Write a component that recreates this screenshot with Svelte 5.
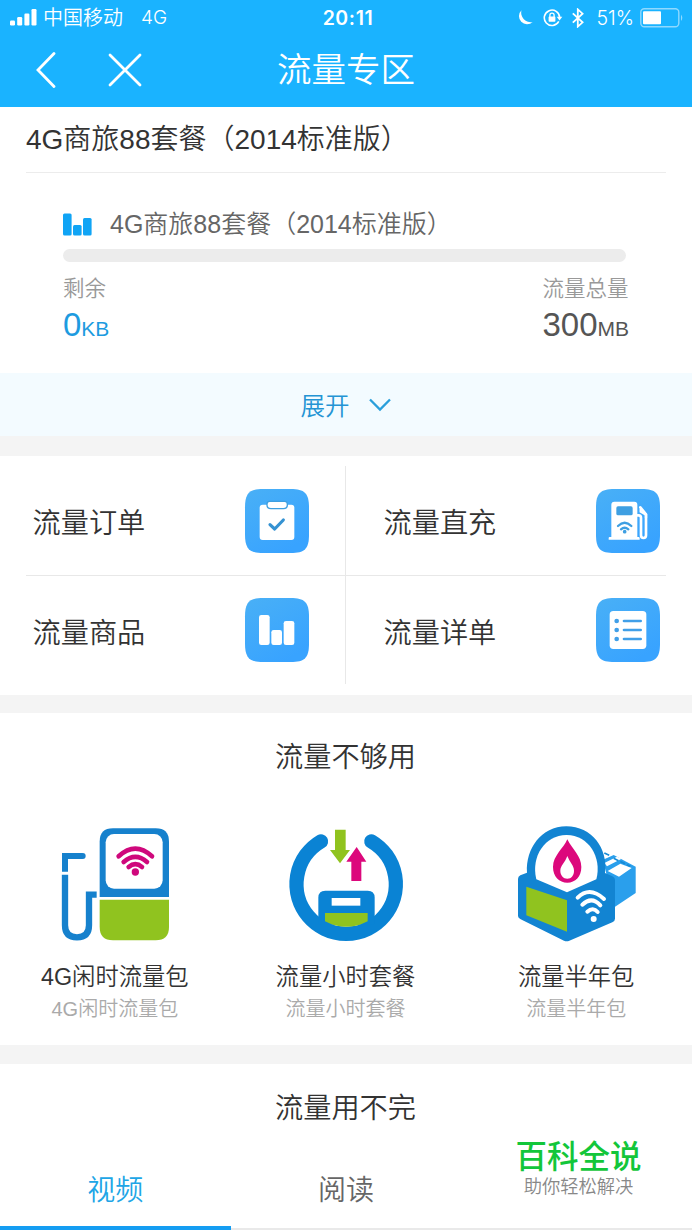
<script>
  let carrier = '中国移动'
  let plan = { name: '4G商旅88套餐', version: '2014标准版' }

  const entries = [
    { icon: 'order', label: '流量订单' },
    { icon: 'charge', label: '流量直充' },
    { icon: 'goods', label: '流量商品' },
    { icon: 'detail', label: '流量详单' }
  ]

  const products = [
    { icon: 'idle', name: '4G闲时流量包' },
    { icon: 'hour', name: '流量小时套餐' },
    { icon: 'half', name: '流量半年包' }
  ]

  const tabs = ['视频', '阅读', '']
  let active = 0
</script>

<div class="page">
  <header>
    <div class="status">
      <div class="left">
        <svg width="27" height="17" viewBox="0 0 27 17" fill="#fff">
          <rect x="0" y="11.5" width="5" height="5" rx="1.2" />
          <rect x="7.2" y="8" width="5" height="8.5" rx="1.2" />
          <rect x="14.4" y="4.5" width="5" height="12" rx="1.2" />
          <rect x="21.5" y="0" width="5" height="16.5" rx="1.2" />
        </svg>
        <span class="carrier">{carrier}</span>
        <span class="net">4G</span>
      </div>
      <b class="time">20:11</b>
      <div class="right">
        <svg width="16" height="16" viewBox="0 0 16 16">
          <path d="M4.5 0.3A8 8 0 1 0 15.7 12A9.5 9.5 0 0 1 4.5 0.3z" fill="#fff" />
        </svg>
        <svg class="lock" width="20" height="18" viewBox="0 0 20 18" fill="none" stroke="#fff">
          <path d="M15.8 12.4A7.7 7.7 0 1 1 16.7 8.5" stroke-width="1.6" />
          <path d="M13.7 7.8h5.6l-2.8 3.6z" fill="#fff" stroke="none" />
          <path d="M6.9 8V6.2a2.1 2.1 0 0 1 4.2 0V8" stroke-width="1.3" />
          <rect x="5.6" y="7.6" width="6.8" height="5.2" rx="0.8" fill="#fff" stroke="none" />
        </svg>
        <svg class="bt" width="12" height="20" viewBox="0 0 12 20" fill="none" stroke="#fff" stroke-width="1.8">
          <path d="M0.8 5.3l9.8 9-4.8 4.3V1.4l4.8 4.3-9.8 9" />
        </svg>
        <span class="percent">51%</span>
        <svg class="battery" width="44" height="20" viewBox="0 0 44 20">
          <rect x="0.8" y="0.8" width="38" height="18" rx="3.5" fill="none" stroke="#8fd9ff" stroke-width="1.4" />
          <rect x="3" y="3.2" width="18" height="13" rx="1" fill="#fff" />
          <path d="M41 6.5q2.6 3.3 0 6.6z" fill="#8fd9ff" />
        </svg>
      </div>
    </div>
    <nav>
      <div class="actions">
        <svg width="20" height="36" viewBox="0 0 20 36" fill="none" stroke="#fff" stroke-width="2.8" stroke-linecap="round">
          <path d="M18 1.5L2 18l16 16.5" />
        </svg>
        <svg width="34" height="34" viewBox="0 0 34 34" fill="none" stroke="#fff" stroke-width="2.8" stroke-linecap="round">
          <path d="M2 2l30 30M32 2L2 32" />
        </svg>
      </div>
      <h1>流量专区</h1>
    </nav>
  </header>

  <section class="plan">
    <h2>{plan.name}（{plan.version}）</h2>
    <div class="usage">
      <div class="name">
        <svg width="29" height="23" viewBox="0 0 29 23" fill="#10a4f5">
          <rect x="0" y="0.5" width="8.6" height="22" rx="1.5" />
          <rect x="10" y="12" width="8.6" height="10.5" rx="1.5" />
          <rect x="20" y="5" width="8.6" height="17.5" rx="1.5" />
        </svg>
        <span>{plan.name}（{plan.version}）</span>
      </div>
      <div class="track"></div>
      <div class="amounts">
        <div>
          <p>剩余</p>
          <div class="num blue">0<small>KB</small></div>
        </div>
        <div>
          <p>流量总量</p>
          <div class="num">300<small>MB</small></div>
        </div>
      </div>
    </div>
    <div class="expand">
      <span>展开</span>
      <svg width="24" height="14" viewBox="0 0 24 14" fill="none" stroke="#2a9fdb" stroke-width="2.3">
        <path d="M2 1.5l10 10 10-10" />
      </svg>
    </div>
  </section>

  <section class="entries">
    {#each entries as e}
      <div class="entry">
        <span>{e.label}</span>
        <svg width="66" height="66" viewBox="0 0 198 198">
          <defs>
            <linearGradient id="bg-{e.icon}" x1="0" y1="0" x2="0.6" y2="1">
              <stop offset="0" stop-color="#49b0f6" />
              <stop offset="1" stop-color="#38a3ff" />
            </linearGradient>
          </defs>
          <path d="M3 58C3 16 16 3 58 3H140C182 3 195 16 195 58V140C195 182 182 195 140 195H58C16 195 3 182 3 140z" fill="url(#bg-{e.icon})" />
          {#if e.icon === 'order'}
            <rect x="47" y="50" width="104" height="106" rx="9" fill="#fff" />
            <path d="M69 48q0-8 8-8h45q8 0 8 8v3q0 11-12 11H81q-12 0-12-11z" fill="#fff" stroke="#3e9fe0" stroke-width="4" />
            <path d="M78 110l14 13 26-27" fill="none" stroke="#3592d2" stroke-width="9.5" stroke-linecap="round" stroke-linejoin="round" />
          {:else if e.icon === 'charge'}
            <path d="M49 50q0-9 9-9h60q9 0 9 9v97h4q3 0 3 3v5H41v-5q0-3 3-3h5z" fill="#fff" />
            <rect x="64" y="55" width="49" height="27" rx="5" fill="#3e9fe2" />
            <g fill="none" stroke="#3e9fe2" stroke-width="7" stroke-linecap="round">
              <path d="M69 114q20-19 40 0" />
              <path d="M78 124q11-10 22 0" />
            </g>
            <circle cx="89" cy="131" r="5.5" fill="#3e9fe2" />
            <path d="M127 82h4q7 0 7 8v52q0 8 7.5 8t7.5-8V79l-17-21" fill="none" stroke="#fff" stroke-width="8" stroke-linecap="round" stroke-linejoin="round" />
            <path d="M137 62v9l16 9v10" fill="none" stroke="#fff" stroke-width="7" />
          {:else if e.icon === 'goods'}
            <rect x="45" y="54" width="32" height="90" rx="7" fill="#fff" />
            <rect x="82" y="99" width="32" height="45" rx="7" fill="#fff" />
            <rect x="119" y="72" width="32" height="72" rx="7" fill="#fff" />
          {:else}
            <rect x="44" y="42" width="110" height="114" rx="11" fill="#fff" />
            {#each [72, 99, 126] as y}
              <circle cx="65" cy={y} r="7" fill="#409fe8" />
              <path d="M87 {y}h50" stroke="#409fe8" stroke-width="8" stroke-linecap="round" />
            {/each}
          {/if}
        </svg>
      </div>
    {/each}
  </section>

  <section class="products">
    <h3>流量不够用</h3>
    <div class="list">
      {#each products as p}
        <div class="product">
          {#if p.icon === 'idle'}
            <svg width="160" height="120" viewBox="-14 40 480 360">
              <path d="M180 262V96q0-40 40-40h128q40 0 40 40v166z" fill="#1681cd" />
              <rect x="198" y="73" width="171" height="164" rx="25" fill="#fff" />
              <path d="M180 270h208v82q0 40-40 40H220q-40 0-40-40z" fill="#90c31f" />
              <path d="M76 186v-47h52" fill="none" stroke="#1681cd" stroke-width="18" />
              <circle cx="129" cy="139" r="9" fill="#1681cd" />
              <path d="M76 195v152q0 36 36 36t36-36v-92h23" fill="none" stroke="#1681cd" stroke-width="19" />
              <g fill="none" stroke="#cf087c" stroke-width="14" stroke-linecap="round">
                <path d="M237 140q50-46 100 0" />
                <path d="M252 157q35-31 70 0" />
                <path d="M267 172q20-17 40 0" />
              </g>
              <circle cx="287" cy="187" r="11" fill="#cf087c" />
            </svg>
          {:else if p.icon === 'hour'}
            <svg width="160" height="120" viewBox="-12 40 480 360">
              <path d="M153 95A149 149 0 1 0 304 95" fill="none" stroke="#0a83d4" stroke-width="43" stroke-linecap="round" />
              <path d="M145 345v-81q0-21 21-21h127q21 0 21 21v81z" fill="#0a83d4" />
              <rect x="185" y="265" width="86" height="23" fill="#fff" />
              <path d="M165 310h128v25q-64 33-128 0z" fill="#90c31f" />
              <path d="M195 60h32v61h13l-30 40-30-40h15z" fill="#90c31f" />
              <path d="M260 112l29 44h-15v58h-30v-58h-15z" fill="#dc087c" />
            </svg>
          {:else}
            <svg width="160" height="120" viewBox="-10 40 480 360">
              <path d="M308 150l32-14 66 35v79l-64 43z" fill="#2a9fec" />
              <path d="M306 136l12-6 14 7-16 9zM312 160l38-19 14 6-44 23zM322 184l38-22 34 13-38 26z" fill="#fff" />
              <path d="M312 130l20 9M340 146l50 24" stroke="#168ad5" stroke-width="5" stroke-dasharray="16 6" />
              <path d="M53 208q0-7 7-11l20-8c-4-72 42-138 118-139 76 0 126 66 116 140l22 10q8 4 8 10v117q0 7-8 11l-129 55q-8 4-16 0l-130-64q-8-4-8-10z" fill="#1284d2" />
              <path d="M108 209c-17-69 26-132 90-133 65-1 108 66 90 133l-88 39z" fill="#fff" />
              <path d="M201 89c15 31 42 49 42 83 0 29-18 47-42 47s-43-18-43-47c0-34 31-55 43-83z" fill="#dc087c" />
              <path d="M201 139c8 20 20 29 20 44 0 14-8 24-20 24s-21-10-21-24c0-15 14-24 21-44z" fill="#fff" />
              <path d="M78 231l122 41v94L78 317z" fill="#90c31f" />
              <g fill="none" stroke="#fff" stroke-width="12" stroke-linecap="round">
                <path d="M232 264q36-36 79 4" />
                <path d="M246 285q28-26 54 2" />
                <path d="M261 306q17-15 31 1" />
              </g>
              <circle cx="280" cy="328" r="9" fill="#fff" />
            </svg>
          {/if}
          <strong>{p.name}</strong>
          <em>{p.name}</em>
        </div>
      {/each}
    </div>
  </section>

  <section class="more">
    <h3>流量用不完</h3>
    <div class="tabs">
      {#each tabs as t, i}
        <div class="tab" class:active={i === active}>{t}</div>
      {/each}
    </div>
    <div class="brand">
      <b>百科全说</b>
      <span>助你轻松解决</span>
    </div>
  </section>
</div>

<style>
  :global(body) {
    margin: 0;
    background: #f4f4f4;
  }
  .page {
    width: 692px;
    height: 1230px;
    overflow: hidden;
    font-family: "Liberation Sans", "Noto Sans CJK SC", sans-serif;
    font-weight: 350;
    color: #333;
  }
  svg { display: block; flex: none; }
  h1, h2, h3, p { margin: 0; font-weight: inherit; }
  section { background: #fff; box-sizing: border-box; }

  header {
    height: 107px;
    background: #1ab3ff;
    color: #fff;
  }
  .status {
    display: grid;
    grid-template-columns: 1fr auto 1fr;
    align-items: center;
    height: 35px;
    padding: 0 8px 0 10px;
    line-height: 34px;
  }
  .left, .right { display: flex; align-items: center; }
  .right { justify-content: flex-end; }
  .carrier { margin-left: 6px; font-size: 20px; }
  .net { margin-left: 18px; font-family: Inter, sans-serif; font-size: 19px; }
  .time { padding-left: 2px; font-family: Inter, sans-serif; font-size: 19.5px; font-weight: 600; letter-spacing: 0.6px; }
  .lock { margin-left: 10px; }
  .bt { margin-left: 9px; }
  .percent { margin: 0 6px 0 12px; font-family: Inter, sans-serif; font-size: 19.5px; }

  nav {
    display: grid;
    grid-template-columns: 1fr auto 1fr;
    align-items: center;
    height: 70px;
  }
  .actions { display: flex; align-items: center; gap: 52px; padding-left: 36px; }
  h1 { font-size: 34.5px; line-height: 70px; height: 70px; }

  .plan { height: 329px; }
  h2 {
    height: 65px;
    margin: 0 26px;
    border-bottom: 1px solid #ececec;
    font-size: 28px;
    line-height: 65px;
    white-space: nowrap;
  }
  .usage { height: 200px; padding: 30px 63px 0; box-sizing: border-box; }
  .name {
    display: flex;
    align-items: center;
    gap: 18px;
    height: 42px;
    font-size: 25px;
    line-height: 42px;
    color: #666;
    white-space: nowrap;
  }
  .track { height: 13px; margin: 4px 3px 0 0; border-radius: 7px; background: #ececec; }
  .amounts { display: flex; justify-content: space-between; margin-top: 12px; }
  p { font-size: 21.5px; line-height: 30px; color: #999; }
  .num { font-size: 33px; line-height: 41px; color: #555; }
  .num small { font-size: 21px; }
  .num.blue { color: #1d9be0; }
  .expand {
    display: flex;
    align-items: center;
    justify-content: center;
    gap: 18px;
    height: 63px;
    background: #f3fbff;
    color: #2494d4;
    font-size: 24.5px;
  }

  .entries {
    display: grid;
    grid-template-columns: 320px 320px;
    grid-template-rows: 110px 108px;
    height: 239px;
    margin-top: 20px;
    padding: 10px 26px 11px;
  }
  .entry {
    display: flex;
    align-items: center;
    justify-content: space-between;
    box-sizing: border-box;
    padding: 0 35px 0 6.5px;
    font-size: 28.2px;
  }
  .entry:nth-child(odd) { border-right: 1px solid #e8e8e8; }
  .entry:nth-child(even) { padding: 0 5.5px 0 37.5px; }
  .entry:nth-child(-n + 2) { border-bottom: 1px solid #e8e8e8; }

  .products { height: 332px; margin-top: 18px; padding-top: 24px; }
  h3 { font-size: 28.2px; line-height: 40px; text-align: center; padding-right: 1px; }
  .list { display: grid; grid-template-columns: repeat(3, 1fr); margin-top: 46px; }
  .product { display: flex; flex-direction: column; align-items: center; }
  .product strong { margin: 17px 1px 0 0; font-size: 23.3px; font-weight: inherit; line-height: 34px; }
  .product em { margin-right: 1px; font-size: 20px; font-style: normal; line-height: 31px; color: #aaa; }

  .more { position: relative; height: 166px; margin-top: 19px; padding-top: 24px; }
  .tabs { display: grid; grid-template-columns: repeat(3, 1fr); margin-top: 22px; }
  .tab {
    height: 80px;
    box-sizing: border-box;
    border-bottom: 2px solid #e9e9e9;
    font-size: 28px;
    line-height: 81px;
    text-align: center;
    color: #666;
  }
  .tab.active { border-bottom: 4px solid #159df2; color: #20a5e6; }
  .brand {
    position: absolute;
    top: 73px;
    left: 515px;
    width: 127px;
    text-align: center;
    white-space: nowrap;
  }
  .brand b { display: block; font-size: 31.5px; font-weight: 500; line-height: 40px; color: #13c63a; }
  .brand span { display: block; font-size: 18.3px; line-height: 20px; color: #888; }
</style>
